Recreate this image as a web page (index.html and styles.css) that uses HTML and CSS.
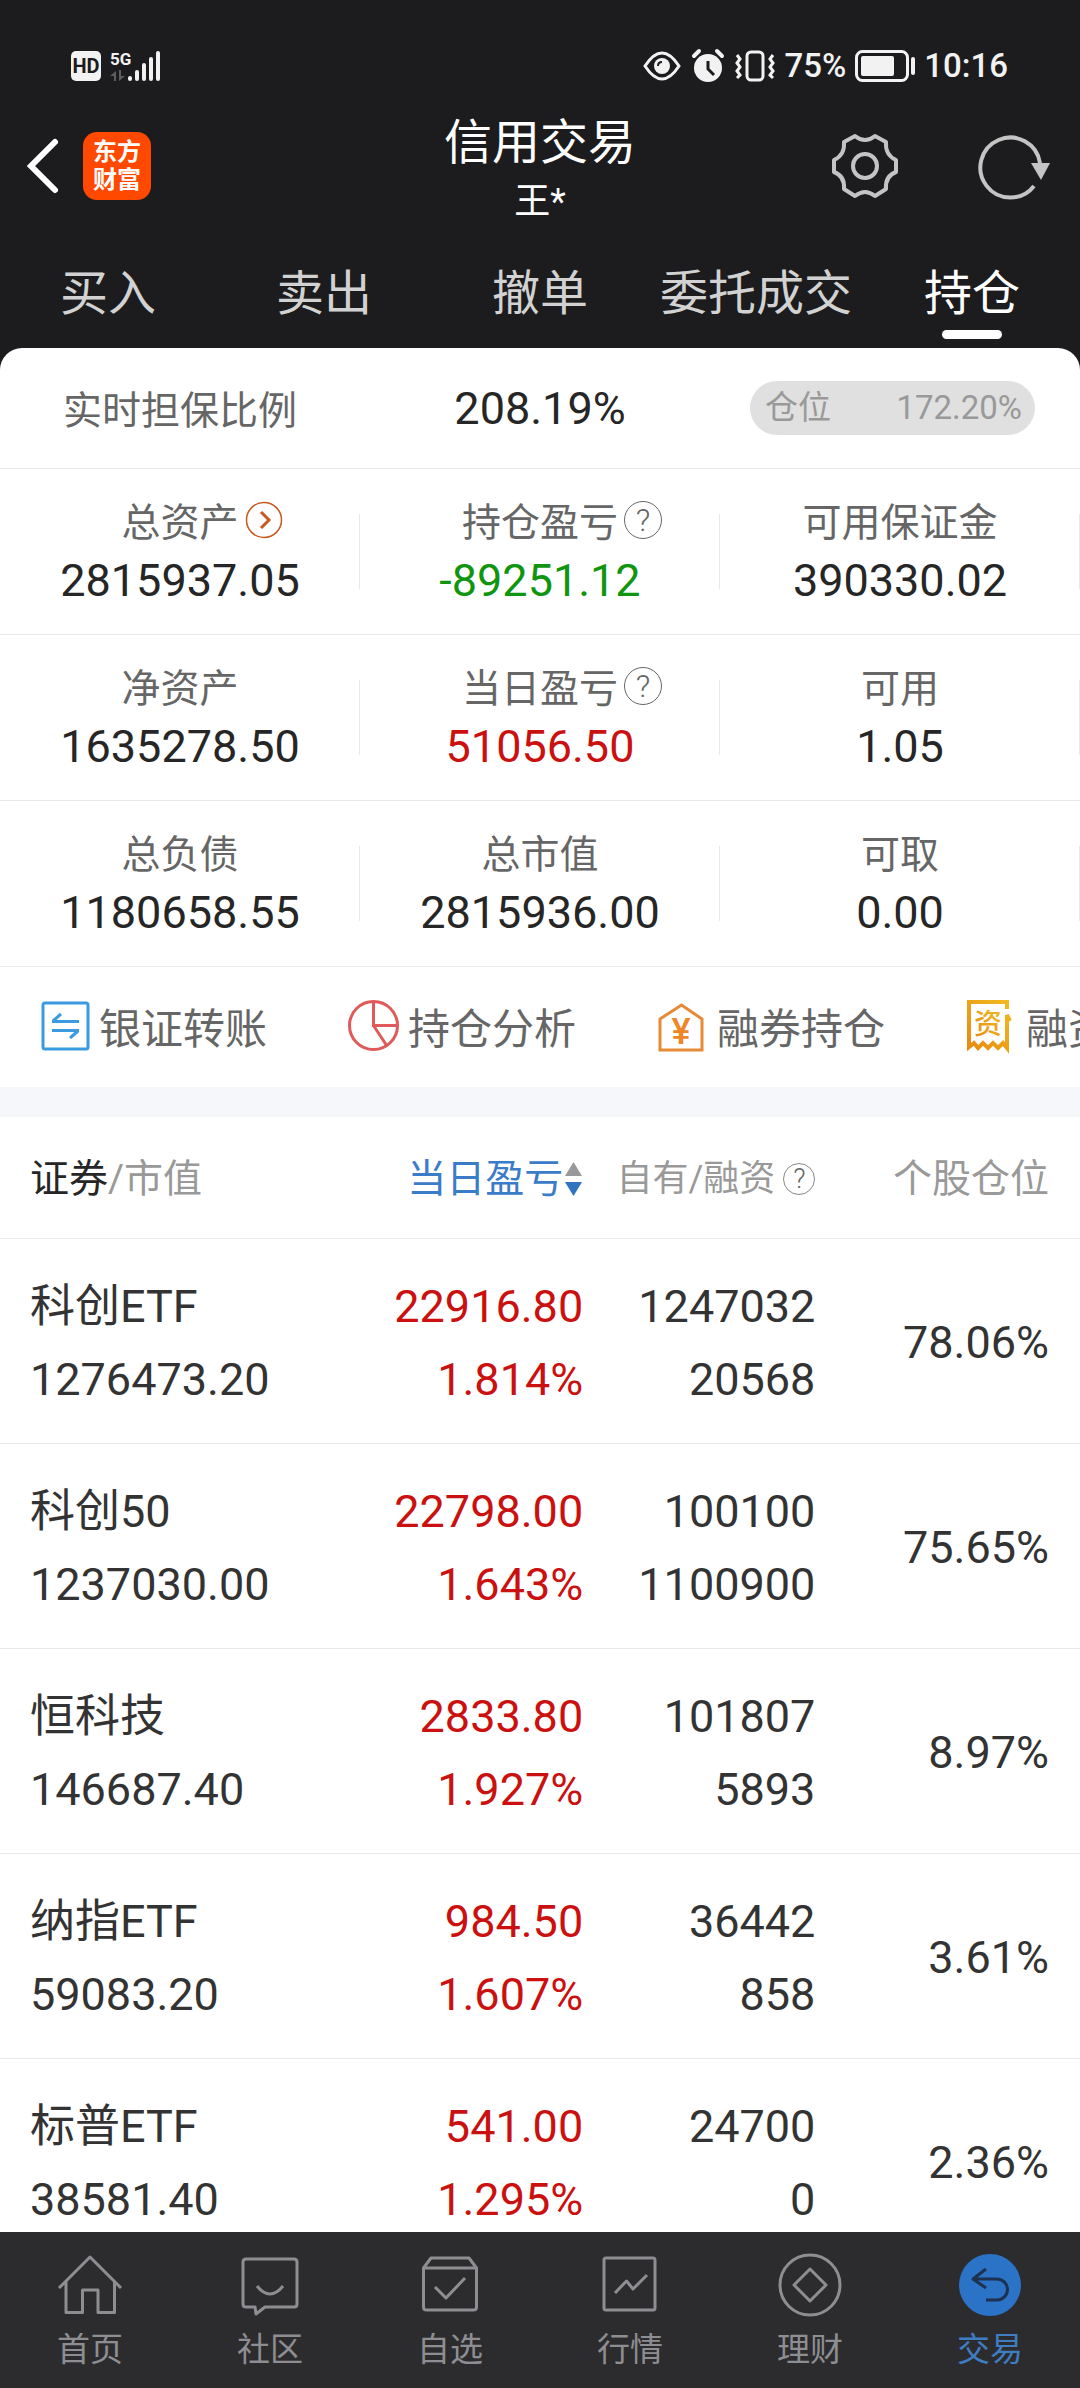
FILE: index.html
```html
<!DOCTYPE html>
<html lang="zh-CN">
<head>
<meta charset="utf-8">
<meta name="viewport" content="width=device-width">
<title>信用交易</title>
<link rel="stylesheet" href="styles.css">
</head>
<body>
<div class="app">
  <div class="status">
    <div class="status-side">
      <span class="hd">HD</span>
      <svg class="signal" width="50" height="34" viewBox="0 0 50 34">
        <text x="0" y="16" class="net">5G</text>
        <path d="M6 32V22L0 27H4V32ZM9 21V32L15 27H11V21Z" fill="#5d5d5f"/>
        <g stroke="#f2f2f2" stroke-width="4" stroke-linecap="round"><path d="M20 29v1M27 23v7M34 16v14M41 10v20M48 4v26"/></g>
      </svg>
    </div>
    <div class="status-side">
      <svg class="spaced" width="38" height="32" viewBox="0 0 38 32"><path d="M2 16Q19-10 36 16Q19 42 2 16Z" fill="none" stroke="#f2f2f2" stroke-width="3"/><circle cx="19" cy="16" r="8" fill="#f2f2f2"/><path d="M15 16q0-4 4-4" fill="none" stroke="#1c1c1e" stroke-width="2"/></svg>
      <svg class="spaced" width="32" height="32" viewBox="0 0 32 32"><circle cx="16" cy="18" r="14" fill="#f2f2f2"/><path d="M16 11v8l6 6" fill="none" stroke="#1c1c1e" stroke-width="3"/><path d="M2 6l5-5M30 6l-5-5" stroke="#f2f2f2" stroke-width="4" stroke-linecap="round"/></svg>
      <svg width="40" height="32" viewBox="0 0 40 32"><g fill="none" stroke="#f2f2f2" stroke-width="3"><rect x="12" y="2" width="16" height="28" rx="4"/><path d="M2 5l3 4-3 4 3 4-3 4 3 4-3 3M38 5l-3 4 3 4-3 4 3 4-3 4 3 3"/></g></svg>
      <span>75%</span>
      <svg width="60" height="32" viewBox="0 0 60 32"><rect x="1.500" y="1.500" width="51" height="29" rx="6" fill="none" stroke="#f2f2f2" stroke-width="3"/><rect x="6" y="6" width="33" height="20" rx="2" fill="#f2f2f2"/><path d="M58 9v14" stroke="#f2f2f2" stroke-width="4" stroke-linecap="round"/></svg>
      <span>10:16</span>
    </div>
  </div>

  <header class="header">
    <div class="header-left">
      <button class="icon-btn" aria-label="返回"><svg width="32" height="56" viewBox="0 0 32 56"><path d="M28 4L4 28l24 24" fill="none" stroke="#fff" stroke-width="6" stroke-linecap="round"/></svg></button>
      <a class="logo" href="#"><span>东方</span><span>财富</span></a>
    </div>
    <div class="titles">
      <h1>信用交易</h1>
      <p>王*</p>
    </div>
    <div class="header-right">
      <button class="icon-btn" aria-label="设置"><svg width="66" height="66" viewBox="0 0 66 66" fill="none" stroke="#c4c4c4" stroke-width="4" stroke-linejoin="round"><path d="M23 3Q33 11 43 3L54 9Q53 22 64 27V39Q53 43 54 56L43 63Q33 55 23 63L12 56Q13 43 2 39V27Q13 22 12 9Z"/><circle cx="33" cy="33" r="12"/></svg></button>
      <button class="icon-btn" aria-label="刷新"><svg width="72" height="66" viewBox="0 0 72 66"><path d="M56 53A30 30 0 1 1 62 30" fill="none" stroke="#c4c4c4" stroke-width="4"/><path d="M53 30h19l-9 17z" fill="#c4c4c4"/></svg></button>
    </div>
  </header>

  <nav class="tabs">
    <a href="#">买入</a>
    <a href="#">卖出</a>
    <a href="#">撤单</a>
    <a href="#">委托成交</a>
    <a href="#" class="active">持仓</a>
  </nav>

  <main class="sheet">
    <section class="ratio">
      <span class="label">实时担保比例</span>
      <span class="value">208.19%</span>
      <div class="pill"><span>仓位</span><span>172.20%</span></div>
    </section>

    <section class="stats">
      <div class="stat"><div class="stat-head"><span class="label">总资产</span><button class="more" aria-label="查看总资产"><svg width="38" height="38" viewBox="0 0 38 38" fill="none" stroke="#c8581c"><circle cx="19" cy="19" r="17.500" stroke-width="1.500"/><path d="M16 11l8 8-8 8" stroke-width="3"/></svg></button></div><span class="value">2815937.05</span></div>
      <div class="stat"><div class="stat-head"><span class="label">持仓盈亏</span><button class="help">?</button></div><span class="value down">-89251.12</span></div>
      <div class="stat"><div class="stat-head"><span class="label">可用保证金</span></div><span class="value">390330.02</span></div>
      <div class="stat"><div class="stat-head"><span class="label">净资产</span></div><span class="value">1635278.50</span></div>
      <div class="stat"><div class="stat-head"><span class="label">当日盈亏</span><button class="help">?</button></div><span class="value up">51056.50</span></div>
      <div class="stat"><div class="stat-head"><span class="label">可用</span></div><span class="value">1.05</span></div>
      <div class="stat"><div class="stat-head"><span class="label">总负债</span></div><span class="value">1180658.55</span></div>
      <div class="stat"><div class="stat-head"><span class="label">总市值</span></div><span class="value">2815936.00</span></div>
      <div class="stat"><div class="stat-head"><span class="label">可取</span></div><span class="value">0.00</span></div>
    </section>

    <nav class="shortcuts">
      <a href="#"><svg width="51" height="51" viewBox="0 0 51 51" fill="none" stroke="#3b9be0" stroke-width="3"><rect x="4" y="3" width="45" height="46" rx="2"/><path d="M13 21.500H40M13 30.500H40"/><path d="M14 21l8-7M39 31l-8 7"/></svg>银证转账</a>
      <a href="#"><svg width="51" height="51" viewBox="0 0 51 51" fill="none" stroke="#e05a5a" stroke-width="3"><circle cx="25.500" cy="25.500" r="24"/><path d="M25.500 2V25.500H49M25.500 25.500L39 46"/></svg>持仓分析</a>
      <a href="#"><svg width="51" height="51" viewBox="0 0 51 51"><path d="M3 50V19L24.500 5L45 19V50Z" fill="none" stroke="#e68a37" stroke-width="3"/><text x="24" y="44" text-anchor="middle" class="yen">¥</text></svg>融券持仓</a>
      <a href="#"><svg width="51" height="51" viewBox="0 0 51 51"><defs><linearGradient id="gold" x1="0" y1="1" x2="1" y2="0"><stop offset="0" stop-color="#e88a10"/><stop offset="1" stop-color="#f0bc22"/></linearGradient></defs><path d="M41 9V2H3V47L8 43L12 48L17 43L22 48L27 43L32 48L37 43L41 48V15L44 21" fill="none" stroke="url(#gold)" stroke-width="4"/><text x="22" y="34" text-anchor="middle" class="zi">资</text></svg>融资持仓</a>
    </nav>

    <table class="holdings">
      <thead>
        <tr>
          <th class="c-name"><b>证券</b>/市值</th>
          <th class="c-profit"><button class="sort">当日盈亏<svg width="17" height="36" viewBox="0 0 17 36"><path d="M8.500 1L17 15H0Z" fill="#999"/><path d="M8.500 35L17 21H0Z" fill="#3273c0"/></svg></button></th>
          <th class="c-shares"><span class="own">自有/融资<button class="help small">?</button></span></th>
          <th class="c-weight">个股仓位</th>
        </tr>
      </thead>
      <tbody>
        <tr><td>科创ETF<br>1276473.20</td><td class="up">22916.80<br>1.814%</td><td>1247032<br>20568</td><td>78.06%</td></tr>
        <tr><td>科创50<br>1237030.00</td><td class="up">22798.00<br>1.643%</td><td>100100<br>1100900</td><td>75.65%</td></tr>
        <tr><td>恒科技<br>146687.40</td><td class="up">2833.80<br>1.927%</td><td>101807<br>5893</td><td>8.97%</td></tr>
        <tr><td>纳指ETF<br>59083.20</td><td class="up">984.50<br>1.607%</td><td>36442<br>858</td><td>3.61%</td></tr>
        <tr><td>标普ETF<br>38581.40</td><td class="up">541.00<br>1.295%</td><td>24700<br>0</td><td>2.36%</td></tr>
      </tbody>
    </table>
  </main>

  <nav class="bottom">
    <a href="#"><svg width="66" height="66" viewBox="0 0 66 66"><path d="M2 36L33 5L64 36M9 29V60.500H25.500V38H41V60.500H57.500V29"/></svg>首页</a>
    <a href="#"><svg width="66" height="66" viewBox="0 0 66 66"><path d="M9 7H57Q60 7 60 10V52Q60 55 57 55H28L19 62L18 55H9Q6 55 6 52V10Q6 7 9 7Z"/><path d="M20 34Q33 50 46 34"/></svg>社区</a>
    <a href="#"><svg width="66" height="66" viewBox="0 0 66 66"><path d="M6.500 16L14 6H52L59.500 16V55Q59.500 58 56.500 58H9.500Q6.500 58 6.500 55ZM6.500 16H59.500M18 35L29 46L48 26"/></svg>自选</a>
    <a href="#"><svg width="66" height="66" viewBox="0 0 66 66"><rect x="7" y="6" width="51" height="52" rx="2"/><path d="M18 41L29.500 29L36 37L50 23"/></svg>行情</a>
    <a href="#"><svg width="66" height="66" viewBox="0 0 66 66"><circle cx="33" cy="33" r="30"/><path d="M33 17L49 33L33 49L17 33Z"/></svg>理财</a>
    <a href="#" class="active"><svg width="66" height="66" viewBox="0 0 66 66"><circle cx="33" cy="33" r="31"/><path d="M29 17L16 27L29 36M16 27H40A10.500 10.500 0 0 1 40 48H29"/></svg>交易</a>
  </nav>
</div>
</body>
</html>
```
FILE: styles.css
```css
* {
  box-sizing: border-box;
}

body {
  margin: 0;
  font-family: Roboto, "Noto Sans CJK SC", sans-serif;
  color: #262626;
}

a {
  color: inherit;
  text-decoration: none;
}

button {
  padding: 0;
  border: 0;
  background: none;
  color: inherit;
  font: inherit;
}

svg {
  display: block;
  flex: none;
  overflow: visible;
}

.app {
  display: flex;
  flex-direction: column;
  height: 100vh;
  overflow: hidden;
  background: #1c1c1e;
}

/* Status bar */
.status {
  display: flex;
  justify-content: space-between;
  flex: none;
  padding: 36px 72px 0 71px;
  color: #f2f2f2;
  font-size: 33px;
  font-weight: 500;
  line-height: 60px;
}

.status-side {
  display: flex;
  align-items: center;
  gap: 9px;
}

.spaced {
  margin-right: 2px;
}

.hd {
  width: 30px;
  border-radius: 5px;
  background: #f2f2f2;
  color: #1c1c1e;
  font-size: 20px;
  font-weight: 700;
  line-height: 30px;
  text-align: center;
}

.net {
  fill: #f2f2f2;
  font-size: 17px;
  font-weight: 700;
}

/* Header */
.header {
  display: grid;
  grid-template-columns: 1fr auto 1fr;
  flex: none;
  color: #fff;
}

.header-left,
.header-right {
  display: flex;
  align-items: center;
}

.header-left {
  gap: 24px;
  padding-left: 27px;
}

.header-right {
  justify-content: flex-end;
  gap: 80px;
  padding-right: 30px;
}

.logo {
  display: flex;
  flex-direction: column;
  align-items: center;
  justify-content: center;
  width: 68px;
  height: 68px;
  border-radius: 14px;
  background: #ff4800;
  font-size: 24px;
  font-weight: 700;
  line-height: 28px;
}

.titles {
  padding: 16px 0 6px;
  text-align: center;
}

.titles h1 {
  margin: 0;
  font-size: 48px;
  font-weight: 400;
  line-height: 62px;
}

.titles p {
  margin: 0;
  font-size: 36px;
  line-height: 56px;
}

/* Section tabs */
.tabs {
  display: grid;
  grid-template-columns: repeat(5, 1fr);
  flex: none;
  padding: 26px 0 9px;
  color: #d2d2d2;
  font-size: 48px;
  line-height: 64px;
}

.tabs a {
  display: flex;
  flex-direction: column;
  align-items: center;
  gap: 4px;
  white-space: nowrap;
}

.tabs a::after {
  content: "";
  width: 60px;
  height: 9px;
  border-radius: 5px;
}

.tabs .active {
  color: #fff;
}

.tabs .active::after {
  background: #fff;
}

/* Account summary */
.sheet {
  flex: 1;
  min-height: 0;
  overflow: hidden;
  border-radius: 22px 22px 0 0;
  background: #fff;
}

.label {
  color: #666;
  font-size: 39px;
}

.value {
  font-size: 45px;
}

.up {
  color: #cb1010;
}

.down {
  color: #109510;
}

.ratio,
.stats {
  display: grid;
  grid-template-columns: repeat(3, 1fr);
  text-align: center;
}

.ratio {
  align-items: baseline;
  height: 121px;
  padding-top: 31px;
  border-bottom: 1px solid #e8e8e8;
  line-height: 60px;
}

.pill {
  display: flex;
  align-self: start;
  justify-content: space-between;
  margin: 2px 45px 0 30px;
  padding: 0 13px 0 15px;
  border-radius: 27px;
  background: #e0e0e0;
  color: #999;
  font-size: 33px;
  line-height: 54px;
}

.stat {
  position: relative;
  padding: 25px 0;
  border-bottom: 1px solid #e8e8e8;
}

.stat::after {
  content: "";
  position: absolute;
  top: 45px;
  right: 0;
  width: 1px;
  height: 75px;
  background: #e8e8e8;
}

.stat-head {
  display: grid;
  grid-template-columns: 1fr auto 1fr;
  align-items: center;
  gap: 6px;
  line-height: 58px;
}

.stat-head .label {
  grid-column: 2;
}

.stat > .value {
  display: block;
  line-height: 57px;
}

.stat-head button {
  justify-self: start;
  margin-bottom: 6px;
}

.help {
  width: 38px;
  height: 38px;
  border: 1px solid #666;
  border-radius: 50%;
  color: #666;
  font-size: 32px;
  font-weight: 300;
  line-height: 36px;
  text-align: center;
}

.help.small {
  width: 32px;
  height: 32px;
  border-color: #888;
  font-size: 27px;
  line-height: 30px;
}

/* Shortcut strip */
.shortcuts {
  display: flex;
  gap: 81px;
  height: 150px;
  padding: 0 0 3px 39px;
  overflow: hidden;
  border-bottom: 30px solid #f6f7fa;
  color: #666;
  font-size: 42px;
  white-space: nowrap;
}

.shortcuts a {
  display: flex;
  flex: none;
  align-items: center;
  gap: 9px;
}

.yen {
  fill: #f08528;
  font-size: 36px;
  font-weight: 500;
}

.zi {
  fill: url(#gold);
  font-size: 28px;
  font-weight: 500;
}

/* Holdings */
.holdings {
  width: 100%;
  border-collapse: collapse;
  table-layout: fixed;
  color: #333;
  font-size: 45px;
  line-height: 73px;
}

.holdings th {
  height: 121px;
  padding: 4px 0 0;
  border-bottom: 1px solid #e8e8e8;
  color: #999;
  font-size: 39px;
  font-weight: 400;
  text-align: right;
  white-space: nowrap;
}

.holdings td {
  height: 205px;
  padding: 4px 0 0;
  border-bottom: 1px solid #e8e8e8;
  text-align: right;
}

.holdings th:first-child,
.holdings td:first-child {
  padding-left: 30px;
  text-align: left;
}

.holdings th:last-child,
.holdings td:last-child {
  padding-right: 31px;
}

.holdings td.up {
  color: #cb1010;
}

.holdings b {
  color: #262626;
  font-weight: 400;
}

.c-name {
  width: 31%;
}

.c-profit {
  width: 23%;
}

.c-shares {
  width: 21.5%;
}

.sort {
  display: flex;
  align-items: center;
  justify-content: flex-end;
  gap: 2px;
  width: 100%;
  padding-right: 1px;
  color: #3b7cc8;
}

.own {
  display: flex;
  align-items: center;
  justify-content: flex-end;
  gap: 8px;
  font-size: 36px;
}

/* Bottom navigation */
.bottom {
  display: grid;
  grid-template-columns: repeat(6, 1fr);
  flex: none;
  padding: 20px 0 16px;
  background: #2c2c2e;
  color: #8e8e92;
  font-size: 33px;
  line-height: 44px;
}

.bottom a {
  display: flex;
  flex-direction: column;
  align-items: center;
  gap: 10px;
}

.bottom svg {
  fill: none;
  stroke: #8e8e92;
  stroke-width: 3;
  stroke-linejoin: round;
}

.bottom .active {
  color: #3f7dc2;
}

.bottom .active circle {
  fill: #2b73c6;
  stroke: none;
}

.bottom .active path {
  stroke: #1d3250;
}
```
